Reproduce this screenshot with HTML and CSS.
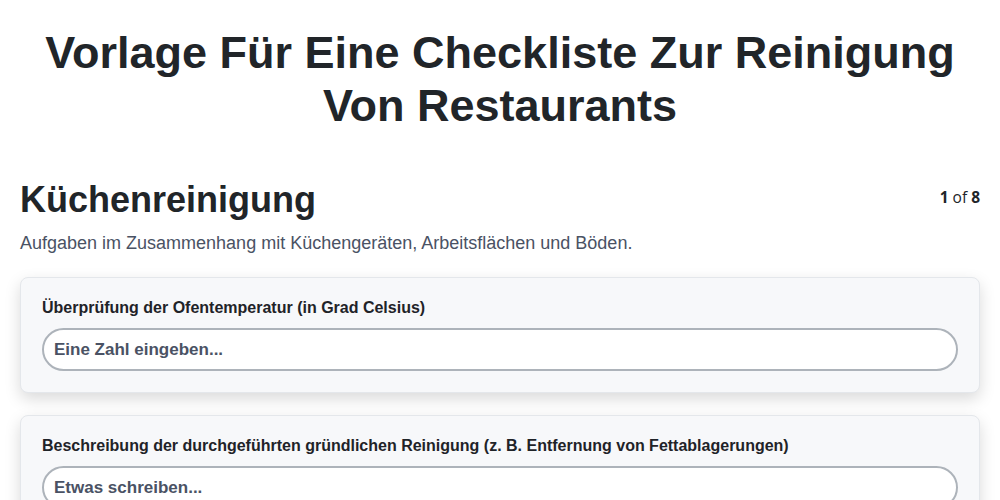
FILE: index.html
```html
<!DOCTYPE html>
<html lang="de">
<head>
<meta charset="utf-8">
<title>Checkliste</title>
<link rel="stylesheet" href="styles.css">
</head>
<body>
<div class="page">
  <h1 class="title">Vorlage Für Eine Checkliste Zur Reinigung Von Restaurants</h1>
  <div class="section-head">
    <h2 class="section-title">Küchenreinigung</h2>
    <div class="pager"><b>1</b> of <b>8</b></div>
  </div>
  <p class="section-desc">Aufgaben im Zusammenhang mit Küchengeräten, Arbeitsflächen und Böden.</p>
  <div class="cards">
    <div class="card">
      <label class="label">Überprüfung der Ofentemperatur (in Grad Celsius)</label>
      <input class="field" type="text" placeholder="Eine Zahl eingeben...">
    </div>
    <div class="card">
      <label class="label">Beschreibung der durchgeführten gründlichen Reinigung (z. B. Entfernung von Fettablagerungen)</label>
      <input class="field" type="text" placeholder="Etwas schreiben...">
    </div>
  </div>
</div>
</body>
</html>
```

FILE: styles.css
```css
html, body {
  margin: 0;
  padding: 0;
  background: #ffffff;
}
body {
  font-family: "Liberation Sans", Arial, sans-serif;
  color: #212529;
}
.page {
  padding: 26px 20px 20px;
}
.title {
  margin: 0 0 46px;
  font-size: 45px;
  line-height: 53px;
  font-weight: 700;
  text-align: center;
  color: #212529;
}
.section-head {
  display: flex;
  justify-content: space-between;
  align-items: flex-start;
}
.section-title {
  margin: 0;
  font-size: 36px;
  line-height: 1.2;
  font-weight: 700;
  color: #212529;
}
.pager {
  font-family: "Open Sans", "Noto Sans", sans-serif;
  font-size: 15.5px;
  line-height: 1.4;
  padding-top: 9px;
  color: #212529;
}
.pager b {
  font-weight: 700;
}
.section-desc {
  margin: 9px 0 20px;
  font-size: 18px;
  line-height: 1.5;
  color: #4a5264;
}
.cards {
  display: flex;
  flex-direction: column;
  gap: 22px;
}
.card {
  background: #f7f8fa;
  border: 1px solid #e4e7eb;
  border-radius: 8px;
  box-shadow: 0 6px 16px rgba(0, 0, 0, 0.15);
  padding: 19px 21px 21px;
  display: flex;
  flex-direction: column;
}
.label {
  font-size: 16px;
  line-height: 22px;
  font-weight: 700;
  color: #1f2328;
  margin-bottom: 9px;
}
.field {
  box-sizing: border-box;
  height: 43px;
  width: 100%;
  border: 2px solid #adb3ba;
  border-radius: 22px;
  background: #ffffff;
  padding: 0 10px;
  font-family: "Liberation Sans", Arial, sans-serif;
  font-size: 17px;
  font-weight: 700;
  color: #212529;
  outline: none;
}
.field::placeholder {
  color: #4a5264;
  opacity: 1;
}
```
